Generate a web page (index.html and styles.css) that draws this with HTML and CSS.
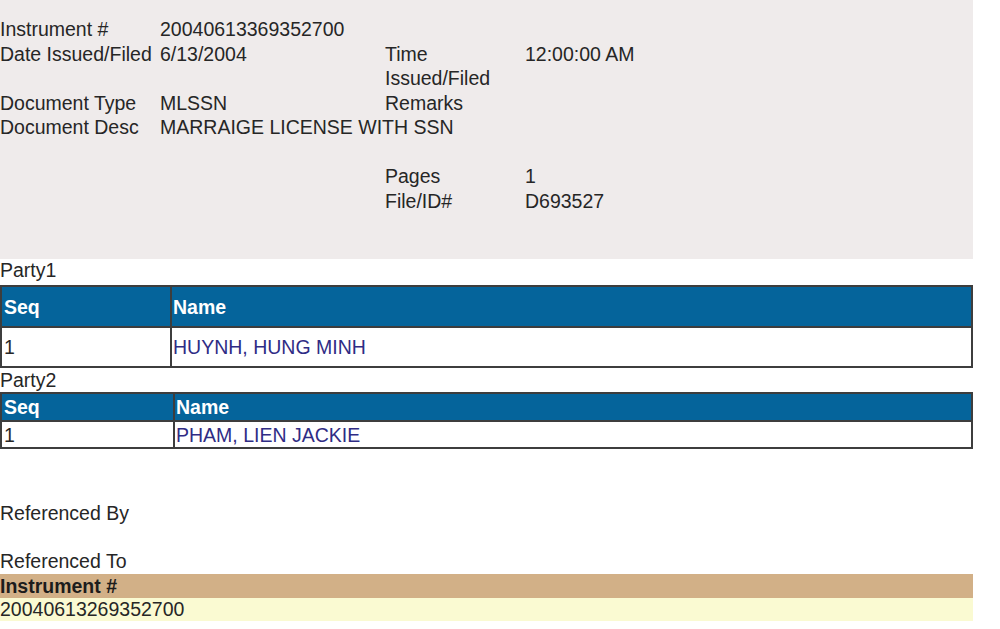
FILE: index.html
```html
<!DOCTYPE html>
<html>
<head>
<meta charset="utf-8">
<link rel="stylesheet" href="styles.css">
</head>
<body>
<div class="page">
  <div class="summary">
    <div class="grid">
      <div class="lbl r1">Instrument #</div>
      <div class="val r1">20040613369352700</div>

      <div class="lbl r2">Date Issued/Filed</div>
      <div class="val r2">6/13/2004</div>
      <div class="lbl2 r2">Time<br>Issued/Filed</div>
      <div class="val2 r2">12:00:00 AM</div>

      <div class="lbl r3">Document Type</div>
      <div class="val r3">MLSSN</div>
      <div class="lbl2 r3">Remarks</div>

      <div class="lbl r4">Document Desc</div>
      <div class="val span r4">MARRAIGE LICENSE WITH SSN</div>

      <div class="lbl2 r6">Pages</div>
      <div class="val2 r6">1</div>

      <div class="lbl2 r7">File/ID#</div>
      <div class="val2 r7">D693527</div>
    </div>
  </div>

  <div class="caption cap-a">Party1</div>
  <table class="party party-a">
    <tr class="head"><th class="seq">Seq</th><th class="nm">Name</th></tr>
    <tr class="row"><td class="seq">1</td><td class="name">HUYNH, HUNG MINH</td></tr>
  </table>

  <div class="caption cap-b">Party2</div>
  <table class="party party-b">
    <tr class="head"><th class="seq">Seq</th><th class="nm">Name</th></tr>
    <tr class="row"><td class="seq">1</td><td class="name">PHAM, LIEN JACKIE</td></tr>
  </table>

  <div class="ref ref-by">Referenced By</div>
  <div class="ref ref-to">Referenced To</div>
  <div class="refbar">Instrument #</div>
  <div class="refrow">20040613269352700</div>
</div>
</body>
</html>
```

FILE: styles.css
```css
html, body {
  margin: 0;
  padding: 0;
  background: #ffffff;
}
body {
  font-family: "Liberation Sans", Arial, sans-serif;
  font-size: 19.5px;
  color: #262626;
}
.page {
  width: 973px;
}
.summary {
  background: #efebeb;
  height: 259px;
  padding-top: 17px;
  box-sizing: border-box;
}
.grid {
  display: grid;
  grid-template-columns: 160px 225px 140px 1fr;
  grid-auto-rows: 24.5px;
  line-height: 24.5px;
}
.lbl { grid-column: 1; white-space: nowrap; }
.val { grid-column: 2; white-space: nowrap; }
.val.span { grid-column: 2 / 5; }
.lbl2 { grid-column: 3; }
.val2 { grid-column: 4; }
.r1 { grid-row: 1; }
.r2 { grid-row: 2 / 4; }
.r3 { grid-row: 4; }
.r4 { grid-row: 5; }
.r6 { grid-row: 7; }
.r7 { grid-row: 8; }

.caption {
  line-height: 22px;
}
.cap-a { padding: 0 0 4px; }
.cap-b { padding: 1px 0 1px; }
.party {
  width: 973px;
  border-collapse: collapse;
  border: 2px solid #3d3d3d;
  table-layout: fixed;
}
.party th, .party td {
  border: 2px solid #3d3d3d;
  padding: 0 0 0 2px;
  text-align: left;
  vertical-align: middle;
  white-space: nowrap;
  line-height: 22px;
}
.party .nm, .party .name { padding-left: 1px; }
.party .head th {
  background: #05649b;
  color: #ffffff;
  font-weight: bold;
}
.party .name {
  color: #2f2c85;
}
.party-a .seq { width: 166px; }
.party-a .head { height: 41px; }
.party-a .row { height: 40px; }
.party-b .seq { width: 169px; }
.party-b .head { height: 28px; }
.party-b .row { height: 27px; }

.ref {
  line-height: 22px;
}
.ref-by { margin-top: 53px; }
.ref-to { margin-top: 26px; }
.refbar {
  margin-top: 2px;
  background: #d2b087;
  font-weight: bold;
  color: #1c1c1c;
  height: 24px;
  line-height: 24px;
}
.refrow {
  background: #fafad2;
  height: 23px;
  line-height: 23px;
}
```
